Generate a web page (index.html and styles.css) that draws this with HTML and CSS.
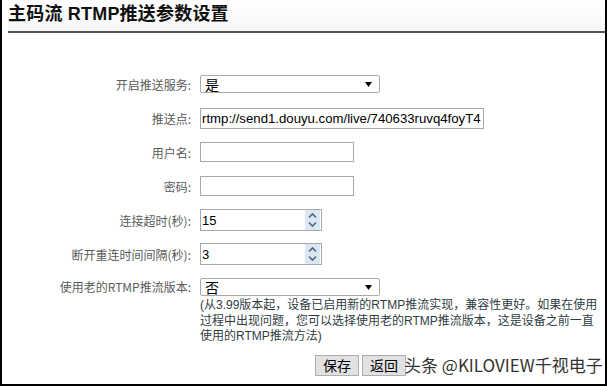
FILE: index.html
```html
<!DOCTYPE html>
<html lang="zh-CN">
<head>
<meta charset="utf-8">
<title>主码流 RTMP推送参数设置</title>
<link rel="stylesheet" href="styles.css">
</head>
<body>
<div class="page">
  <div class="header"><h1 class="title">主码流 RTMP推送参数设置</h1></div>
  <div class="form">
    <div class="row">
      <label class="label">开启推送服务:</label>
      <div class="field"><div class="select"><span>是</span><svg class="arrow" width="7" height="5" viewBox="0 0 7 5"><path d="M0 0H7L3.5 5Z" fill="#000"/></svg></div></div>
    </div>
    <div class="row">
      <label class="label">推送点:</label>
      <div class="field"><input class="input input-url" type="text" value="rtmp://send1.douyu.com/live/740633ruvq4foyT4"></div>
    </div>
    <div class="row">
      <label class="label">用户名:</label>
      <div class="field"><input class="input input-short" type="text" value=""></div>
    </div>
    <div class="row">
      <label class="label">密码:</label>
      <div class="field"><input class="input input-short" type="password" value=""></div>
    </div>
    <div class="row">
      <label class="label">连接超时(秒):</label>
      <div class="field">
        <div class="number"><input class="number-input" type="text" value="15"><span class="spin"><svg width="9" height="16" viewBox="0 0 9 16"><path d="M1 5.5L4.5 2L8 5.5" fill="none" stroke="#4f6580" stroke-width="1.6"/><path d="M1 10.5L4.5 14L8 10.5" fill="none" stroke="#4f6580" stroke-width="1.6"/></svg></span></div>
      </div>
    </div>
    <div class="row">
      <label class="label">断开重连时间间隔(秒):</label>
      <div class="field">
        <div class="number"><input class="number-input" type="text" value="3"><span class="spin"><svg width="9" height="16" viewBox="0 0 9 16"><path d="M1 5.5L4.5 2L8 5.5" fill="none" stroke="#4f6580" stroke-width="1.6"/><path d="M1 10.5L4.5 14L8 10.5" fill="none" stroke="#4f6580" stroke-width="1.6"/></svg></span></div>
      </div>
    </div>
    <div class="row row-top">
      <label class="label label-top">使用老的RTMP推流版本:</label>
      <div class="field field-col">
        <div class="select"><span>否</span><svg class="arrow" width="7" height="5" viewBox="0 0 7 5"><path d="M0 0H7L3.5 5Z" fill="#000"/></svg></div>
        <p class="note">(从3.99版本起，设备已启用新的RTMP推流实现，兼容性更好。如果在使用过程中出现问题，您可以选择使用老的RTMP推流版本，这是设备之前一直使用的RTMP推流方法)</p>
      </div>
    </div>
    <div class="row row-buttons">
      <span class="label"></span>
      <div class="field buttons">
        <button class="btn" type="button">保存</button>
        <button class="btn" type="button">返回</button>
      </div>
    </div>
  </div>
  <div class="watermark">头条 @KILOVIEW千视电子</div>
</div>
</body>
</html>
```
FILE: styles.css
```css
html, body {
  margin: 0;
  padding: 0;
  background: #fff;
}
body {
  font-family: "Liberation Sans", "Noto Sans CJK SC", sans-serif;
}
.page {
  position: relative;
  width: 607px;
  height: 386px;
  box-sizing: border-box;
  border-left: 2px solid #000;
  border-right: 2px solid #000;
  border-bottom: 2px solid #000;
  overflow: hidden;
}
.header {
  margin-left: 6px;
  height: 33px;
  box-sizing: border-box;
  padding-top: 2px;
  border-bottom: 2px solid #555;
  background: linear-gradient(#fff, #f6f6f6);
}
.title {
  margin: 0;
  font-size: 18px;
  line-height: 24px;
  font-weight: bold;
  color: #111;
  letter-spacing: 0.2px;
  font-family: "Liberation Sans", "Noto Sans CJK SC", sans-serif;
}
.form {
  padding-top: 34px;
}
.row {
  display: flex;
  align-items: center;
  height: 34px;
}
.row-top {
  align-items: flex-start;
  height: auto;
}
.label {
  width: 189px;
  flex: none;
  text-align: right;
  font-size: 12px;
  color: #5a5a5a;
  font-family: "Noto Sans CJK SC", "Liberation Sans", sans-serif;
  margin-right: 9px;
}
.label-top {
  margin-top: 7px;
  line-height: 18px;
}
.field {
  display: flex;
  align-items: center;
}
.field-col {
  flex-direction: column;
  align-items: flex-start;
}
.row-top .select {
  margin-top: 7px;
}
.select {
  width: 180px;
  height: 18px;
  box-sizing: border-box;
  border: 1px solid #a9a9a9;
  border-radius: 2px;
  display: flex;
  align-items: center;
  justify-content: space-between;
  padding: 0 7px 0 4px;
  font-size: 14px;
  color: #000;
  font-family: "Noto Sans CJK SC", sans-serif;
  background: #fff;
}
.select span {
  line-height: 16px;
}
.input {
  box-sizing: border-box;
  border: 1px solid #a9a9a9;
  border-radius: 0;
  padding: 0 1px;
  margin: 0;
  font-family: "Liberation Sans", sans-serif;
  font-size: 13px;
  color: #000;
  outline: none;
}
.input-url {
  width: 284px;
  height: 21px;
  font-size: 13.2px;
}
.input-short {
  width: 154px;
  height: 20px;
}
.number {
  width: 122px;
  height: 22px;
  box-sizing: border-box;
  border: 1px solid #a9a9a9;
  display: flex;
  align-items: stretch;
  background: #fff;
}
.number-input {
  flex: 1;
  min-width: 0;
  border: 0;
  padding: 0 0 0 1px;
  margin: 0;
  font-family: "Liberation Sans", sans-serif;
  font-size: 13px;
  color: #000;
  outline: none;
  background: transparent;
}
.spin {
  width: 15px;
  margin-right: 1px;
  background: #dce7f4;
  display: flex;
  align-items: center;
  justify-content: center;
}
.note {
  margin: 2px 0 0;
  width: 403px;
  font-size: 12px;
  line-height: 15.5px;
  color: #2f3d3f;
  font-family: "Liberation Sans", "Noto Sans CJK SC", sans-serif;
}
.row-buttons {
  height: auto;
  margin-top: 10px;
}
.buttons {
  padding-left: 115px;
  gap: 3px;
}
.btn {
  height: 21px;
  box-sizing: border-box;
  padding: 0 7px;
  border: 1px solid #adadad;
  border-radius: 0;
  background: #e1e1e1;
  font-family: "Noto Sans CJK SC", sans-serif;
  font-size: 14px;
  line-height: 19px;
  color: #000;
}
.watermark {
  position: absolute;
  left: 402px;
  top: 354px;
  font-size: 17px;
  line-height: 22px;
  color: #333;
  font-family: "Noto Sans CJK SC", "Liberation Sans", sans-serif;
  text-shadow: 0 0 2px #fff, 0 0 2px #fff;
  white-space: nowrap;
}
```
